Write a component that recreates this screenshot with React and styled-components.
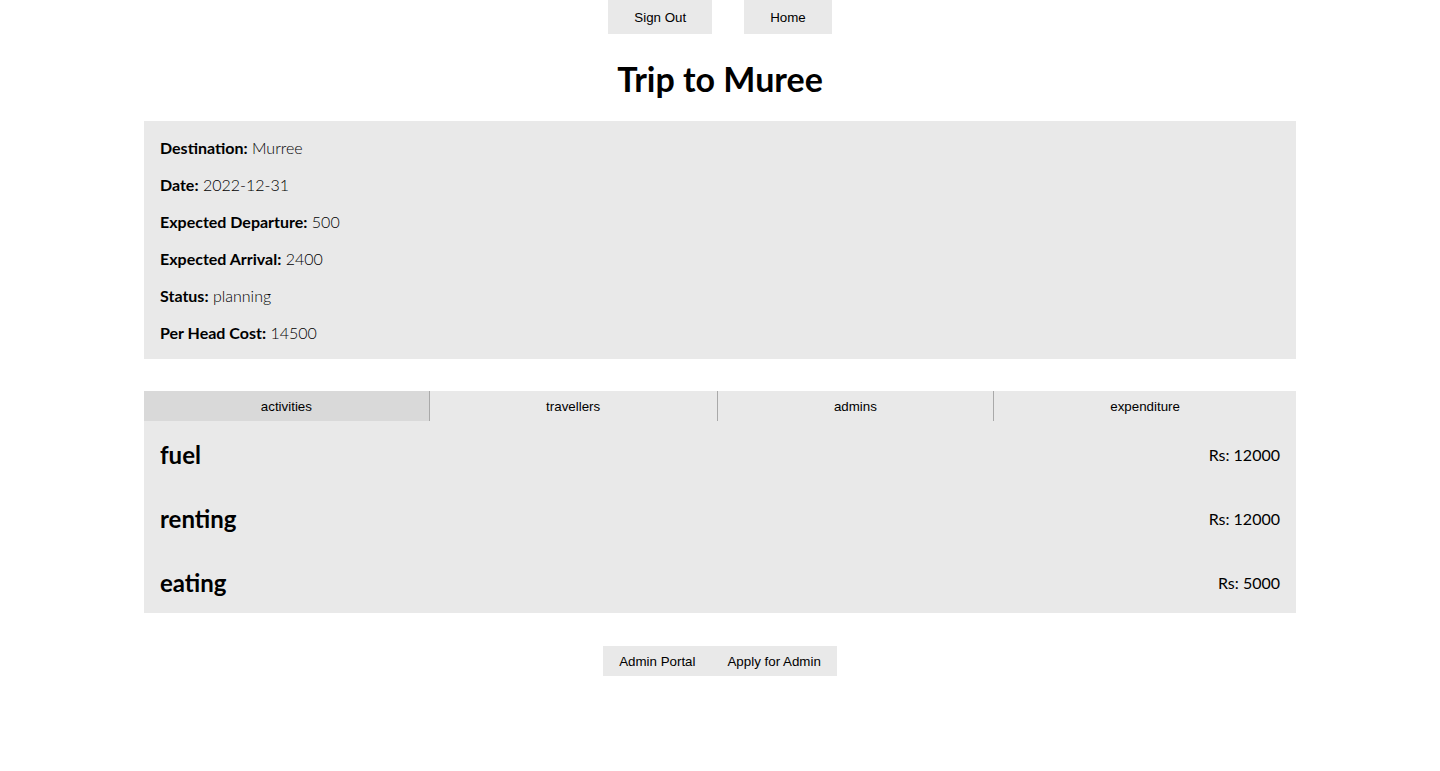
import styled, { createGlobalStyle } from "styled-components";

const GlobalStyle = createGlobalStyle`
  body {
    margin: 0;
    background: #fff;
    font-family: "Lato", "Open Sans", sans-serif;
    color: #000;
  }
`;

const Page = styled.div`
  display: flex;
  flex-direction: column;
  align-items: center;
`;

const TopBar = styled.div`
  display: flex;
  gap: 32px;
`;

const Button = styled.button`
  border: none;
  background-color: #e9e9e9;
  font-family: "Liberation Sans", Arial, sans-serif;
  font-size: 13.33px;
  line-height: 15px;
  color: #000;
  padding: ${(p) => (p.$big ? "10px 26px 9px" : "8px 16px 7px")};
  height: ${(p) => (p.$big ? "34px" : "30px")};
  cursor: pointer;
`;

const Title = styled.h1`
  font-size: 34px;
  font-weight: 700;
  margin: 26px 0 23px;
  line-height: 38px;
`;

const InfoPanel = styled.div`
  width: 80%;
  box-sizing: border-box;
  background-color: #e9e9e9;
  padding: 16px 16px;
  display: flex;
  flex-direction: column;
  gap: 16px;
`;

const InfoRow = styled.p`
  margin: 0;
  font-size: 16px;
  line-height: 21px;
  font-weight: 300;
  b {
    font-weight: 700;
  }
`;

const Section = styled.div`
  width: 80%;
  margin-top: 32px;
  background-color: #e9e9e9;
`;

const Tabs = styled.div`
  display: grid;
  grid-template-columns: 285fr 288fr 277fr 303fr;
  height: 30px;
`;

const Tab = styled.button`
  border: none;
  border-left: ${(p) => (p.$first ? "none" : "1px solid #a9a9a9")};
  background-color: ${(p) => (p.$active ? "#d9d9d9" : "#e9e9e9")};
  font-family: "Liberation Sans", Arial, sans-serif;
  font-size: 13.33px;
  color: #000;
  padding: 1px 0 0;
  cursor: pointer;
`;

const ExpenseRow = styled.div`
  display: flex;
  justify-content: space-between;
  align-items: center;
  padding: 18px 16px 14px;
`;

const ExpenseName = styled.h2`
  margin: 0;
  font-size: 24px;
  line-height: 32px;
  font-weight: 700;
`;

const Amount = styled.span`
  font-size: 16px;
  line-height: 21px;
  margin-top: -2px;
`;

const BottomBar = styled.div`
  display: flex;
  margin-top: 33px;
`;

const info = [
  ["Destination", "Murree"],
  ["Date", "2022-12-31"],
  ["Expected Departure", "500"],
  ["Expected Arrival", "2400"],
  ["Status", "planning"],
  ["Per Head Cost", "14500"],
];

const expenses = [
  ["fuel", 12000],
  ["renting", 12000],
  ["eating", 5000],
];

const tabs = ["activities", "travellers", "admins", "expenditure"];

const App = () => {
  return (
    <Page>
      <GlobalStyle />
      <TopBar>
        <Button $big>Sign Out</Button>
        <Button $big>Home</Button>
      </TopBar>
      <Title>Trip to Muree</Title>
      <InfoPanel>
        {info.map(([label, value]) => (
          <InfoRow key={label}>
            <b>{label}:</b> {value}
          </InfoRow>
        ))}
      </InfoPanel>
      <Section>
        <Tabs>
          {tabs.map((t, i) => (
            <Tab key={t} $first={i === 0} $active={i === 0}>
              {t}
            </Tab>
          ))}
        </Tabs>
        {expenses.map(([name, cost]) => (
          <ExpenseRow key={name}>
            <ExpenseName>{name}</ExpenseName>
            <Amount>Rs: {cost}</Amount>
          </ExpenseRow>
        ))}
      </Section>
      <BottomBar>
        <Button>Admin Portal</Button>
        <Button>Apply for Admin</Button>
      </BottomBar>
    </Page>
  );
};

export default App;
